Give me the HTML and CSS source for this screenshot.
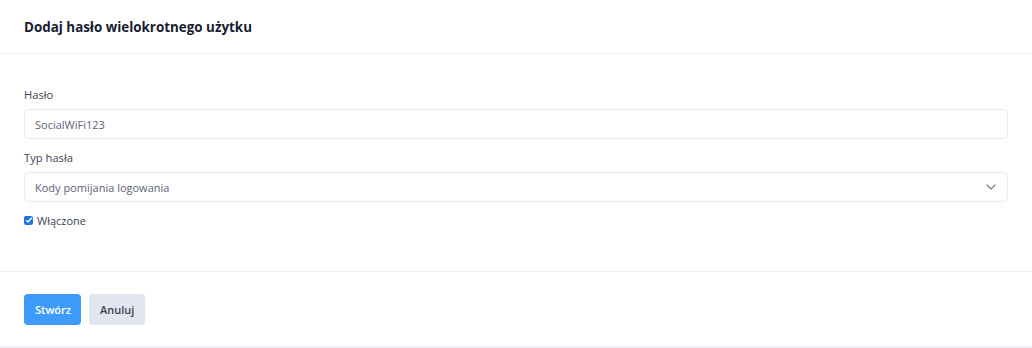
FILE: index.html
```html
<!DOCTYPE html>
<html lang="pl">
<head>
<meta charset="utf-8">
<link rel="stylesheet" href="styles.css">
</head>
<body>
<div class="card">
  <div class="card-header">
    <h3 class="title">Dodaj hasło wielokrotnego użytku</h3>
  </div>
  <div class="card-body">
    <div class="field">
      <label class="label">Hasło</label>
      <div class="input">SocialWiFi123</div>
    </div>
    <div class="field">
      <label class="label">Typ hasła</label>
      <div class="input select">
        <span>Kody pomijania logowania</span>
        <svg class="chev" width="10" height="6" viewBox="0 0 10 6"><path d="M1 1l4 4 4-4" fill="none" stroke="#7e8299" stroke-width="1.3" stroke-linecap="round" stroke-linejoin="round"/></svg>
      </div>
    </div>
    <div class="check-row">
      <span class="checkbox"><svg width="8" height="8" viewBox="0 0 8 8"><path d="M1.2 4.2l1.8 1.8 3.8-4.2" fill="none" stroke="#fff" stroke-width="1.4"/></svg></span>
      <span class="check-label">Włączone</span>
    </div>
  </div>
  <div class="card-footer">
    <button class="btn btn-primary">Stwórz</button>
    <button class="btn btn-light">Anuluj</button>
  </div>
</div>
</body>
</html>
```

FILE: styles.css
```css
* { box-sizing: border-box; }
html, body { margin: 0; padding: 0; }
body {
  background: #eef0f3;
  font-family: "Open Sans", "Noto Sans", sans-serif;
  height: 348px;
}
.card {
  background: #fff;
  height: 346px;
  display: flex;
  flex-direction: column;
}
.card-header {
  height: 54px;
  padding: 0 24px;
  display: flex;
  align-items: center;
  border-bottom: 1px solid #eceef2;
}
.title {
  margin: 0;
  font-size: 13.4px;
  font-weight: 700;
  color: #181c32;
}
.card-body {
  padding: 33px 24px 0;
  height: 218px;
  border-bottom: 1px solid #eceef2;
}
.field { margin-bottom: 11px; }
.label {
  display: block;
  font-size: 11.2px;
  line-height: 16px;
  color: #3f4254;
  margin-bottom: 6px;
}
.input {
  height: 30px;
  border: 1px solid #e8eaf0;
  border-radius: 5px;
  padding: 0 10px;
  display: flex;
  align-items: center;
  font-size: 11px;
  color: #5e6278;
  width: 984px;
}
.select { justify-content: space-between; padding-right: 11px; }
.check-row {
  display: flex;
  align-items: center;
  gap: 4px;
  margin-top: 3px;
  height: 14px;
}
.checkbox {
  width: 9px;
  height: 9px;
  border-radius: 2px;
  background: #1a73e8;
  display: flex;
  align-items: center;
  justify-content: center;
}
.check-label { font-size: 11px; color: #3f4254; }
.card-footer {
  padding: 22px 24px 0;
  display: flex;
  gap: 8px;
}
.btn {
  height: 31px;
  border: 0;
  border-radius: 4px;
  font-family: inherit;
  font-size: 11px;
  font-weight: 600;
  padding: 0 11px;
}
.btn-primary { background: #3e9bfb; color: #fff; width: 57px; }
.btn-light { background: #e4e6ef; color: #3f4254; width: 56px; }
```
